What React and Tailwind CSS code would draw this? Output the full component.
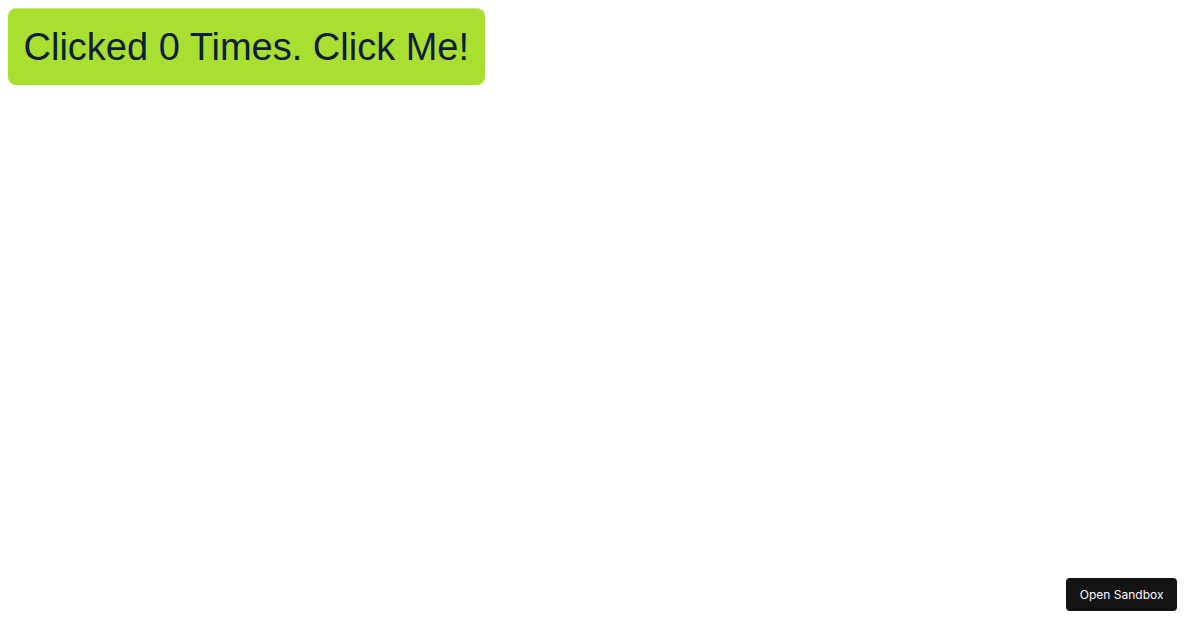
export default function App() {
  return (
    <div className="min-h-[630px] bg-white p-2 font-['Liberation_Sans',Arial,sans-serif]">
      <button className="rounded-lg border-t border-[#c4ea6b] bg-[#a8df30] px-[15.5px] py-4 text-[38px] leading-[44px] text-[#0d1e3d]">
        Clicked 0 Times. Click Me!
      </button>

      <button className="fixed bottom-[19px] right-[23px] h-[33px] rounded bg-[#131313] px-[13.5px] font-['Inter',sans-serif] text-[12px] text-white">
        Open Sandbox
      </button>
    </div>
  )
}
